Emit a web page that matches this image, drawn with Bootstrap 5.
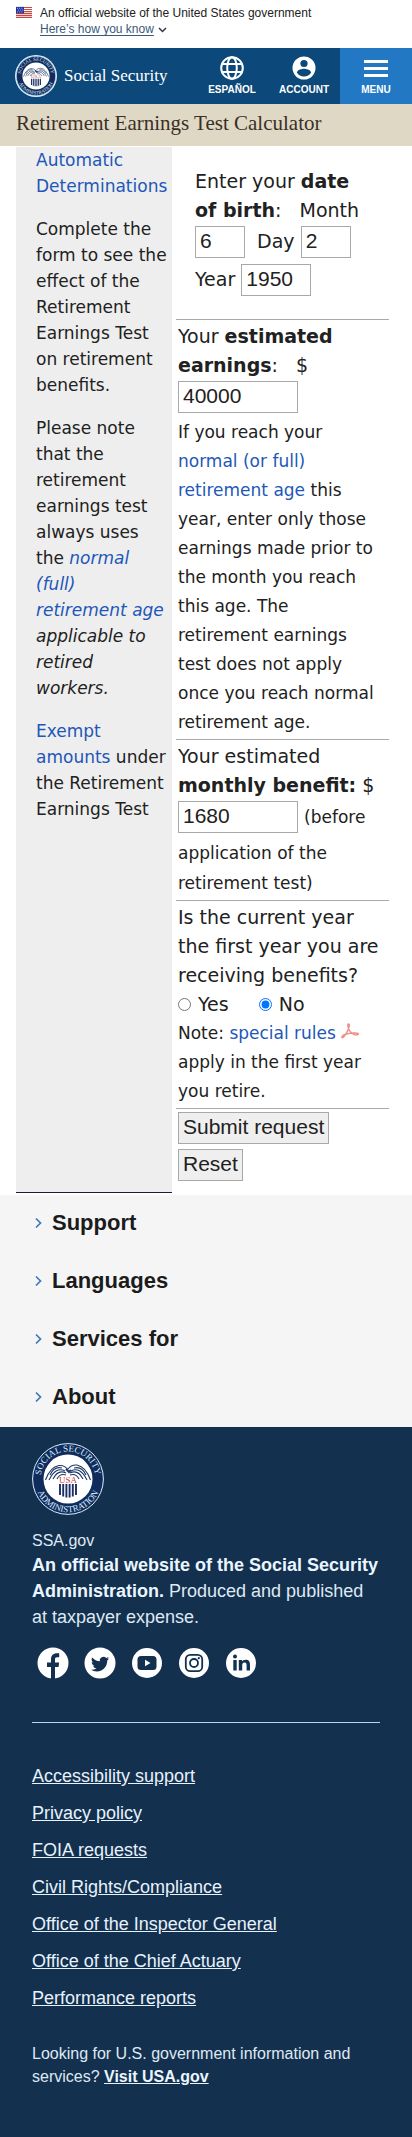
<!DOCTYPE html>
<html lang="en">
<head>
<meta charset="utf-8">
<meta name="viewport" content="width=device-width, initial-scale=1">
<title>Retirement Earnings Test Calculator</title>
<link href="https://cdn.jsdelivr.net/npm/bootstrap@5.3.0/dist/css/bootstrap.min.css" rel="stylesheet">
<style>
  body { font-family: "Liberation Sans", Arial, sans-serif; color: #212121; }
  .gov-banner { font-size: 12px; line-height: 16px; padding: 5px 16px 11px; }
  .gov-banner button { font-size: 12px; line-height: 16px; color: #3b5878; }
  .gov-banner button span { text-decoration: underline; text-underline-offset: 2px; }
  .site-head { background: #0c4879; height: 56px; padding-left: 15px; }
  .brand { font: 17px/24px "Liberation Serif", "Times New Roman", serif; color: #fff; gap: 7px; }
  .head-link { width: 72px; font-size: 10px; line-height: 12px; font-weight: 700; color: #fff; gap: 4px; padding-top: 8px; }
  .head-menu { background: #2378c3; }
  .page-title { background: #dfd8c5; font: 21px/24px "Liberation Serif", "Times New Roman", serif; color: #3b2f25; padding: 7px 16px 11px; }
  .content { font-family: "DejaVu Sans", Verdana, sans-serif; padding: 1px 23px 2px 16px; }
  .content a { color: #2257b8; text-decoration: none; }
  .side-notes { width: 156px; background: #eee; border-bottom: 1px solid #1b1b3a; font-size: 17px; line-height: 26px; padding: 0 2px 0 20px; }
  .side-notes p { margin-bottom: 17px; }
  .calc { margin-left: 4px; font-size: 19px; line-height: 29px; min-width: 0; }
  .calc-row { border-bottom: 1px solid #aaa; padding: 2px 6px 2px 2px; }
  .calc-birth { padding: 20px 16px 18px 19px; }
  .fine { font-size: 17px; }
  .calc input[type=text], .calc button { font: 21px/24px "Liberation Sans", Arial, sans-serif; height: 32px; border: 1px solid #a9a9a9; padding: 2px 4px 4px; color: #212121; }
  .calc input[type=text] { background: #fff; margin: 1px 0 5px; }
  .w-two { width: 50px; }
  .w-four { width: 70px; }
  .w-money { width: 120px; }
  .calc input[type=radio] { width: 13px; height: 13px; margin: 0; }
  .calc button { background: #efefef; }
  .radio-pair { gap: 30px; }
  .radio-pair label { gap: 7px; }
  .calc-actions { gap: 5px; padding: 3px 0 12px 2px; }
  .foot-nav { background: #f5f5f5; padding: 11px 32px 13px; }
  .foot-nav button { font-size: 22px; line-height: 34px; font-weight: 700; color: #1b1b1b; padding: 0; height: 34px; }
  .foot-nav ul { gap: 24px; }
  .site-foot { background: #14304f; color: #dfe9f3; padding: 16px 32px 49px; font-size: 18px; line-height: 26px; }
  .site-foot a { color: #e6f2fc; }
  .site-foot b { color: #eaf6ff; }
  .site-foot hr { border-color: #b5d6ee; opacity: 1; margin: 43px 0 40px; }
  .foot-seal { margin-bottom: 14px; }
  .foot-small { font-size: 16px; line-height: 23px; }
  .foot-links { line-height: 27px; gap: 10px; }
  .foot-usa { margin: 30px 0 0; }
  .socials { gap: 15px; margin: 17px 0 0 5px; }
</style>
</head>
<body>
<svg class="d-none" aria-hidden="true">
  <defs>
    <symbol id="seal" viewBox="0 0 72 72">
      <circle cx="36" cy="36" r="35.4" fill="#112c5c" stroke="#d8efff" stroke-width="1"/>
      <path id="arcTop" d="M8.5 36a27.500 27.500 0 0 1 55 0" fill="none"/>
      <path id="arcLow" d="M2.800 36a33.200 33.200 0 0 0 66.400 0" fill="none"/>
      <g fill="#d8efff" font-family="Liberation Serif, serif" font-size="9" text-anchor="middle">
        <text><textPath href="#arcTop" startOffset="50%">SOCIAL SECURITY</textPath></text>
        <text><textPath href="#arcLow" startOffset="50%">ADMINISTRATION</textPath></text>
      </g>
      <circle cx="36" cy="36" r="24.500" fill="#fff"/>
      <g fill="none" stroke="#1d3a66" stroke-width="1.100">
        <path d="M36 27q-3-5-9-4.500Q18 24 13.500 37M36 26q3-4.500 9-4Q54 24 58.500 37"/>
        <path d="M33 28q-9-5-16 9M34 30q-8-4-13 6M34 32q-6-2-9 4M30 25q-8-2-12 7M39 28q9-5 16 9M38 30q8-4 13 6M38 32q6-2 9 4M42 25q8-2 12 7"/>
        <path d="M34 26l3 3 2-2" stroke-width="2"/>
      </g>
      <text x="36" y="40" fill="#d33a3a" font-family="Liberation Serif, serif" font-size="9" text-anchor="middle">USA</text>
      <path d="M28 41v11M31.200 41v12.500M34.400 41v13.500M37.600 41v13.500M40.800 41v12.500M44 41v11" stroke="#1a2f66" stroke-width="1.900"/>
    </symbol>
  </defs>
</svg>

<section class="gov-banner d-flex" aria-label="Official government website">
  <svg class="me-2 flex-shrink-0" width="16" height="13" viewBox="0 -3 16 14" preserveAspectRatio="none" aria-hidden="true">
    <path fill="#fff" d="M0-1h16v12H0z"/>
    <path d="M0-.3h16M0 1.900h16M0 4.100h16M0 6.300h16M0 8.500h16M0 10.600h16" stroke="#c8473f" stroke-width="1.200"/>
    <path fill="#1d33a0" d="M0-1h8v7H0z"/>
    <path d="M1 .5h6.500M2 2.500h5.500M1 4.500h6.500" stroke="#cdd5ff" stroke-width=".9" stroke-dasharray="1 1.200"/>
  </svg>
  <div>
    <div>An official website of the United States government</div>
    <button type="button" class="btn p-0 border-0 rounded-0 d-flex align-items-center gap-1"><span>Here’s how you know</span><svg width="9" height="7" viewBox="0 0 9 7" fill="none" stroke="#334" stroke-width="1.500" aria-hidden="true"><path d="M1 2l3.500 3.500L8 2"/></svg></button>
  </div>
</section>

<header class="site-head d-flex justify-content-between">
  <a href="#" class="brand d-flex align-items-center text-decoration-none">
    <svg width="42" height="42" aria-hidden="true"><circle cx="21" cy="21" r="21" fill="#d8efff"/><svg x="1" y="1" width="40" height="40"><use href="#seal" width="40" height="40"/></svg></svg>
    <span>Social Security</span>
  </a>
  <nav class="d-flex" aria-label="Primary">
    <a href="#" class="head-link d-flex flex-column align-items-center text-decoration-none">
      <svg width="24" height="24" viewBox="0 0 24 24" fill="none" stroke="#fff" stroke-width="2" aria-hidden="true"><circle cx="12" cy="12" r="10.800"/><ellipse cx="12" cy="12" rx="4.800" ry="10.800"/><path d="M2 8h20M2 16h20"/></svg>
      ESPAÑOL
    </a>
    <a href="#" class="head-link d-flex flex-column align-items-center text-decoration-none">
      <svg width="24" height="24" viewBox="0 0 24 24" aria-hidden="true"><circle cx="12" cy="12" r="11.500" fill="#fff"/><circle cx="12" cy="7.500" r="3.600" fill="#0c4879"/><path d="M4.800 16.500c1-3 5-3.700 7.200-3.700s6.200.7 7.200 3.700c-1.600 2.500-4.200 4-7.200 4s-5.600-1.500-7.200-4z" fill="#0c4879"/></svg>
      ACCOUNT
    </a>
    <button type="button" class="head-link head-menu border-0 px-0 pb-0 d-flex flex-column align-items-center">
      <svg width="24" height="24" viewBox="0 0 24 24" stroke="#fff" stroke-width="3" aria-hidden="true"><path d="M0 5.500h24M0 12.500h24M0 19.500h24"/></svg>
      MENU
    </button>
  </nav>
</header>

<h1 class="page-title m-0">Retirement Earnings Test Calculator</h1>

<main class="content d-flex">
  <aside class="side-notes flex-shrink-0">
    <p><a href="#">Automatic Determinations</a></p>
    <p>Complete the form to see the effect of the Retirement Earnings Test on retirement benefits.</p>
    <p>Please note that the retirement earnings test always uses the <i><a href="#">normal (full) retirement age</a> applicable to retired workers.</i></p>
    <p><a href="#">Exempt amounts</a> under the Retirement Earnings Test</p>
  </aside>
  <form class="calc flex-grow-1">
    <div class="calc-row calc-birth">
      Enter your <b>date<br>of birth</b>:&nbsp;&nbsp; <label for="month">Month</label><br>
      <input type="text" class="w-two" id="month" value="6">&nbsp; <label for="day">Day</label> <input type="text" class="w-two" id="day" value="2"><br>
      <label for="year">Year</label> <input type="text" class="w-four" id="year" value="1950">
    </div>
    <div class="calc-row">
      <label for="earnings">Your <b>estimated earnings</b>:&nbsp;&nbsp; $</label><br>
      <input type="text" class="w-money" id="earnings" value="40000">
      <div class="fine">If you reach your <a href="#">normal (or full) retirement age</a> this year, enter only those earnings made prior to the month you reach this age. The retirement earnings test does not apply once you reach normal retirement age.</div>
    </div>
    <div class="calc-row">
      <label for="benefit">Your estimated <b>monthly benefit:</b> $</label><br>
      <input type="text" class="w-money" id="benefit" value="1680"> <span class="fine">(before application of the retirement test)</span>
    </div>
    <div class="calc-row">
      Is the current year the first year you are receiving benefits?
      <div class="radio-pair d-flex">
        <label class="d-flex align-items-center"><input type="radio" name="first" value="yes">Yes</label>
        <label class="d-flex align-items-center"><input type="radio" name="first" value="no" checked>No</label>
      </div>
      <div class="fine">Note: <a href="#">special rules <svg width="18" height="16" viewBox="0 0 18 16" fill="none" stroke="#ef8f86" stroke-width="1.500" class="align-baseline" aria-hidden="true"><path d="M1 14.500c1 1 4-3 6-7.500s1.500-6 .5-6-1 3 1 6.500 6.500 5.500 8.500 4-6-2.500-13 0c-2 1-3.500 2-3 3z"/></svg></a> apply in the first year you retire.</div>
    </div>
    <div class="calc-actions d-flex flex-column align-items-start">
      <button type="submit">Submit request</button>
      <button type="reset">Reset</button>
    </div>
  </form>
</main>

<nav class="foot-nav" aria-label="Footer sections">
  <ul class="list-unstyled d-flex flex-column m-0">
    <li><button type="button" class="btn border-0 d-flex align-items-center"><svg width="12" height="12" class="me-2" viewBox="0 0 12 12" fill="none" stroke="#3d7ab5" stroke-width="1.700" aria-hidden="true"><path d="M4 1.500l4.500 4.500L4 10.500"/></svg>Support</button></li>
    <li><button type="button" class="btn border-0 d-flex align-items-center"><svg width="12" height="12" class="me-2" viewBox="0 0 12 12" fill="none" stroke="#3d7ab5" stroke-width="1.700" aria-hidden="true"><path d="M4 1.500l4.500 4.500L4 10.500"/></svg>Languages</button></li>
    <li><button type="button" class="btn border-0 d-flex align-items-center"><svg width="12" height="12" class="me-2" viewBox="0 0 12 12" fill="none" stroke="#3d7ab5" stroke-width="1.700" aria-hidden="true"><path d="M4 1.500l4.500 4.500L4 10.500"/></svg>Services for</button></li>
    <li><button type="button" class="btn border-0 d-flex align-items-center"><svg width="12" height="12" class="me-2" viewBox="0 0 12 12" fill="none" stroke="#3d7ab5" stroke-width="1.700" aria-hidden="true"><path d="M4 1.500l4.500 4.500L4 10.500"/></svg>About</button></li>
  </ul>
</nav>

<footer class="site-foot">
  <svg class="foot-seal d-block" width="72" height="72" role="img" aria-label="Social Security Administration seal"><use href="#seal" width="72" height="72"/></svg>
  <div class="foot-small">SSA.gov</div>
  <p class="m-0"><b>An official website of the Social Security Administration.</b> Produced and published at taxpayer expense.</p>
  <div class="socials d-flex">
    <a href="#" class="d-flex" aria-label="Facebook"><svg width="32" height="32" viewBox="0 0 32 32"><circle cx="16" cy="16" r="15.500" fill="#fff"/><path d="M14 32V20h-4v-4.500h4V12.500c0-4 2.300-6.200 6-6.200h2.200v4h-2c-1.800 0-2.200.9-2.200 2.200v3h4.200l-.7 4.500H18v12z" fill="#14304f"/></svg></a>
    <a href="#" class="d-flex" aria-label="Twitter"><svg width="32" height="32" viewBox="0 0 32 32"><circle cx="16" cy="16" r="15.500" fill="#fff"/><path transform="translate(7 7.500) scale(1.130)" fill="#14304f" d="M5.026 15c6.038 0 9.341-5.003 9.341-9.334 0-.14 0-.282-.006-.422A6.685 6.685 0 0 0 16 3.542a6.658 6.658 0 0 1-1.889.518 3.301 3.301 0 0 0 1.447-1.817 6.533 6.533 0 0 1-2.087.793A3.286 3.286 0 0 0 7.875 6.030a9.325 9.325 0 0 1-6.767-3.429 3.289 3.289 0 0 0 1.018 4.382A3.323 3.323 0 0 1 .64 6.575v.045a3.288 3.288 0 0 0 2.632 3.218 3.203 3.203 0 0 1-.865.115 3.230 3.230 0 0 1-.614-.057 3.283 3.283 0 0 0 3.067 2.277A6.588 6.588 0 0 1 .78 13.580a6.320 6.320 0 0 1-.78-.045A9.344 9.344 0 0 0 5.026 15z"/></svg></a>
    <a href="#" class="d-flex" aria-label="YouTube"><svg width="32" height="32" viewBox="0 0 32 32"><circle cx="16" cy="16" r="15" fill="#fff"/><rect x="6.500" y="9" width="19" height="14" rx="3.500" fill="#14304f"/><path d="M14 12.700l5.500 3.300-5.500 3.300z" fill="#fff"/></svg></a>
    <a href="#" class="d-flex" aria-label="Instagram"><svg width="32" height="32" viewBox="0 0 32 32"><circle cx="16" cy="16" r="15" fill="#fff"/><g fill="none" stroke="#14304f" stroke-width="1.800"><rect x="7.800" y="7.800" width="16.400" height="16.400" rx="4.500"/><circle cx="16" cy="16" r="4"/></g><circle cx="20.800" cy="11.200" r="1.100" fill="#14304f"/></svg></a>
    <a href="#" class="d-flex" aria-label="LinkedIn"><svg width="32" height="32" viewBox="0 0 32 32"><circle cx="16" cy="16" r="15" fill="#fff"/><g fill="#14304f"><circle cx="10" cy="9.500" r="2"/><path d="M8.300 13h3.400v10.500H8.300zM13.800 13h3.300v1.500c.6-1 1.800-1.800 3.500-1.800 3.300 0 4.400 1.900 4.400 5.300v5.500h-3.400v-5c0-1.800-.4-3-2-3-1.700 0-2.400 1.200-2.400 3v5h-3.400z"/></g></svg></a>
  </div>
  <hr>
  <ul class="foot-links list-unstyled d-flex flex-column m-0">
    <li><a href="#">Accessibility support</a></li>
    <li><a href="#">Privacy policy</a></li>
    <li><a href="#">FOIA requests</a></li>
    <li><a href="#">Civil Rights/Compliance</a></li>
    <li><a href="#">Office of the Inspector General</a></li>
    <li><a href="#">Office of the Chief Actuary</a></li>
    <li><a href="#">Performance reports</a></li>
  </ul>
  <p class="foot-small foot-usa">Looking for U.S. government information and services? <a href="#"><b>Visit USA.gov</b></a></p>
</footer>
<script src="https://cdn.jsdelivr.net/npm/bootstrap@5.3.0/dist/js/bootstrap.bundle.min.js"></script>
</body>
</html>
